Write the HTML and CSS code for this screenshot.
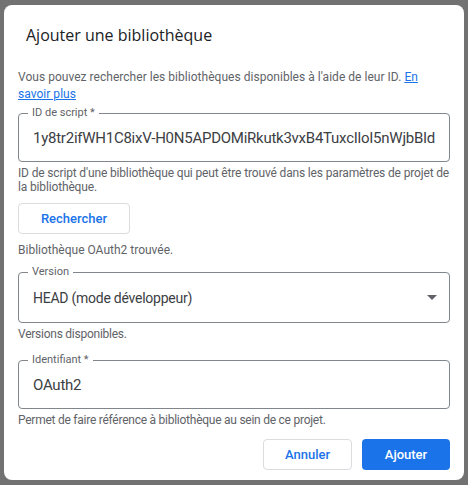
FILE: index.html
```html
<!DOCTYPE html>
<html lang="fr">
<head>
<meta charset="utf-8">
<title>Ajouter une bibliothèque</title>
<link rel="stylesheet" href="styles.css">
</head>
<body>
<div class="dialog">
  <h1 class="title">Ajouter une bibliothèque</h1>
  <p class="intro">Vous pouvez rechercher les bibliothèques disponibles à l'aide de leur ID. <a href="#" class="link">En savoir plus</a></p>

  <div class="field field-id">
    <span class="field-label">ID de script *</span>
    <div class="field-value">1y8tr2ifWH1C8ixV-H0N5APDOMiRkutk3vxB4TuxcIloI5nWjbBId</div>
  </div>
  <p class="helper helper-id">ID de script d'une bibliothèque qui peut être trouvé dans les paramètres de projet de la bibliothèque.</p>

  <button class="btn btn-outline btn-search">Rechercher</button>
  <p class="helper status">Bibliothèque OAuth2 trouvée.</p>

  <div class="field field-version">
    <span class="field-label">Version</span>
    <div class="field-value field-value-small">HEAD (mode développeur)</div>
    <svg class="arrow" width="10" height="5" viewBox="0 0 10 5"><path d="M0 0h10L5 5z" fill="#5f6368"/></svg>
  </div>
  <p class="helper helper-short">Versions disponibles.</p>

  <div class="field field-name">
    <span class="field-label">Identifiant *</span>
    <div class="field-value">OAuth2</div>
  </div>
  <p class="helper helper-short">Permet de faire référence à bibliothèque au sein de ce projet.</p>

  <div class="actions">
    <button class="btn btn-outline btn-cancel">Annuler</button>
    <button class="btn btn-primary">Ajouter</button>
  </div>
</div>
</body>
</html>
```

FILE: styles.css
```css
html, body {
  margin: 0;
  padding: 0;
}
body {
  background: #727272;
  width: 468px;
  height: 485px;
  overflow: hidden;
  font-family: Roboto, "Liberation Sans", Arial, sans-serif;
}
.dialog {
  box-sizing: border-box;
  margin: 5px 4px 0 4px;
  width: 460px;
  height: 475px;
  background: #fff;
  border-radius: 8px;
  padding: 0 14px;
  display: flex;
  flex-direction: column;
}
.title {
  margin: 18px 0 0 8px;
  font-family: "Open Sans", Roboto, sans-serif;
  font-weight: 400;
  font-size: 16px;
  line-height: 24px;
  color: #202124;
}
.intro {
  margin: 22px 0 0 0;
  font-size: 12px;
  line-height: 17px;
  letter-spacing: 0.03px;
  color: #5f6368;
}
.link {
  color: #1a73e8;
  text-decoration: underline;
}
.field {
  position: relative;
  box-sizing: border-box;
  border: 1px solid #80868b;
  border-radius: 4px;
  display: flex;
  align-items: center;
  padding: 0 14px;
}
.field-id { margin-top: 10px; height: 49px; }
.field-version { margin-top: 15px; height: 51px; justify-content: space-between; padding-right: 12px; }
.field-name { margin-top: 19px; height: 49px; }
.field-label {
  position: absolute;
  left: 9px;
  top: -8px;
  padding: 0 4px;
  background: #fff;
  font-size: 11px;
  line-height: 14px;
  color: #5f6368;
}
.field-value {
  font-size: 15px;
  letter-spacing: -0.25px;
  color: #3c4043;
  white-space: nowrap;
  margin-top: 1px;
}
.field-value-small {
  font-size: 14px;
}
.helper {
  margin: 4px 0 0 0;
  font-size: 12px;
  line-height: 14px;
  color: #5f6368;
}
.helper-id {
  letter-spacing: -0.15px;
}
.helper-short {
  letter-spacing: -0.25px;
}
.btn {
  box-sizing: border-box;
  height: 31px;
  border-radius: 4px;
  font-family: Roboto, "Liberation Sans", Arial, sans-serif;
  font-size: 13px;
  font-weight: 500;
  cursor: pointer;
}
.btn-outline {
  background: #fff;
  border: 1px solid #dadce0;
  color: #1a73e8;
}
.btn-search {
  margin-top: 9px;
  width: 112px;
  align-self: flex-start;
}
.status { margin-top: 9px; }
.actions {
  margin-top: 12px;
  display: flex;
  justify-content: flex-end;
  gap: 10px;
}
.btn-cancel { width: 89px; }
.btn-primary {
  width: 88px;
  background: #1a73e8;
  border: none;
  color: #fff;
}
```
